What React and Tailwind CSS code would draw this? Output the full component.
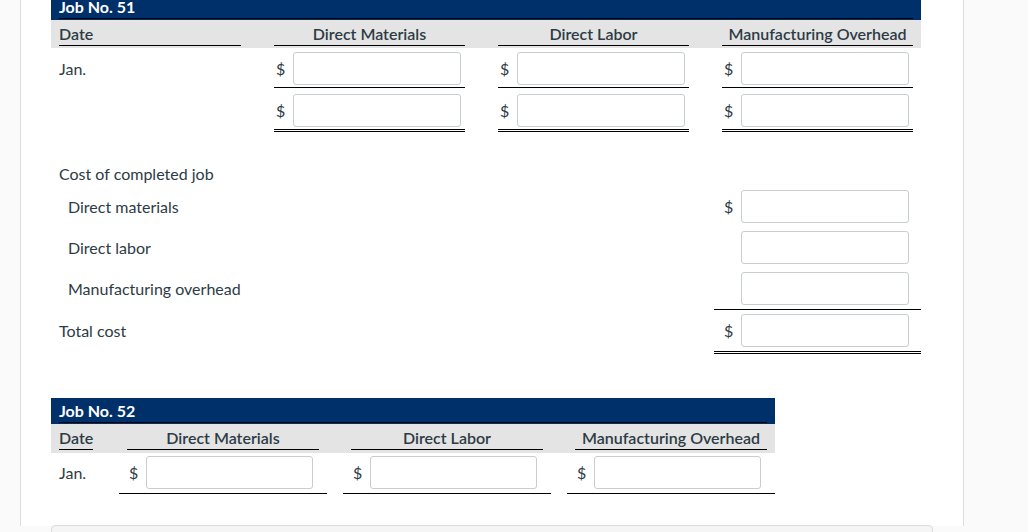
import React from "react";

const ink = "text-[#2d3b45]";

function Box({ w = "w-[168px]" }) {
    return <div className={`${w} h-[33px] shrink-0 rounded-[3px] border border-[#c7cdd1] bg-white`} />;
}

function Money({ dollar = true, w }) {
    return (
        <div className="flex items-center h-[33px]">
            <span className="w-[19px] pl-[2px] shrink-0">{dollar ? "$" : ""}</span>
            <Box w={w} />
        </div>
    );
}

function JobOne() {
    const heads = ["Direct Materials", "Direct Labor", "Manufacturing Overhead"];
    return (
        <div className="w-[870px] -mt-[6px]">
            <div className="h-[26px] bg-[#003069] px-2">
                <div className="h-[25px] border-b border-black text-white font-bold leading-[25px]">Job No. 51</div>
            </div>
            <div className="h-[28px] bg-[#e4e4e4] flex">
                <div className="w-[198px] px-2">
                    <div className="h-[26px] border-b border-black font-semibold leading-[27px]">Date</div>
                </div>
                {heads.map((h) => (
                    <div key={h} className="w-[207px] ml-[17px] px-2">
                        <div className="h-[26px] border-b border-black font-semibold leading-[27px] text-center">{h}</div>
                    </div>
                ))}
            </div>

            {/* Jan. row */}
            <div className="flex">
                <div className="w-[198px] px-2 mt-[4px] h-[33px] flex items-center">Jan.</div>
                {heads.map((h) => (
                    <div key={h} className="w-[207px] ml-[17px] px-2">
                        <div className="h-[40px] pt-[4px] border-b border-black">
                            <Money />
                        </div>
                    </div>
                ))}
            </div>
            <div className="flex">
                <div className="w-[198px] px-2" />
                {heads.map((h) => (
                    <div key={h} className="w-[207px] ml-[17px] px-2">
                        <div className="h-[44px] pt-[6px] border-b-[3px] border-double border-black">
                            <Money />
                        </div>
                    </div>
                ))}
            </div>

            <div className="h-[25px]" />
            <div className="h-[33px] flex items-center px-2">Cost of completed job</div>

            <div className="flex h-[33px] items-center mb-[8px]">
                <div className="pl-[17px]">Direct materials</div>
                <div className="ml-auto w-[207px] px-2"><Money /></div>
            </div>
            <div className="flex h-[33px] items-center mb-[8px]">
                <div className="pl-[17px]">Direct labor</div>
                <div className="ml-auto w-[207px] px-2"><Money dollar={false} /></div>
            </div>
            <div className="flex">
                <div className="pl-[17px] h-[33px] flex items-center">Manufacturing overhead</div>
                <div className="ml-auto w-[207px] px-2 h-[38px] border-b border-black"><Money dollar={false} /></div>
            </div>
            <div className="flex">
                <div className="px-2 mt-[4px] h-[33px] flex items-center">Total cost</div>
                <div className="ml-auto w-[207px] px-2 pt-[4px] h-[44px] border-b-[3px] border-double border-black"><Money /></div>
            </div>
        </div>
    );
}

function JobTwo() {
    const heads = ["Direct Materials", "Direct Labor", "Manufacturing Overhead"];
    return (
        <div className="w-[724px] mt-[44px]">
            <div className="h-[26px] bg-[#003069] px-2">
                <div className="h-[25px] border-b border-black text-white font-bold leading-[25px]">Job No. 52</div>
            </div>
            <div className="h-[29px] bg-[#e4e4e4] flex">
                <div className="w-[68px] px-2">
                    <div className="h-[26px] inline-block border-b border-black font-semibold leading-[27px]">Date</div>
                </div>
                {heads.map((h, i) => (
                    <div key={h} className={`w-[208px] px-2 ${i ? "ml-[16px]" : ""}`}>
                        <div className="h-[26px] border-b border-black font-semibold leading-[27px] text-center">{h}</div>
                    </div>
                ))}
            </div>
            <div className="flex">
                <div className="w-[68px] px-2 mt-[3px] h-[33px] flex items-center">Jan.</div>
                {heads.map((h, i) => (
                    <div key={h} className={`w-[208px] h-[41px] pt-[3px] px-2 border-b border-black ${i ? "ml-[16px]" : ""}`}>
                        <Money w="w-[167px]" />
                    </div>
                ))}
            </div>
        </div>
    );
}

export default function App() {
    return (
        <div className={`h-[532px] overflow-hidden bg-[#fafafa] font-['Lato',sans-serif] text-[16px] ${ink}`}>
            <div className="ml-[20px] w-[944px] h-full border-x border-[#dddddd] bg-white pl-[30px]">
                <JobOne />
                <JobTwo />
                <div className="mt-[31px] w-[882px] h-[40px] rounded-t-[4px] border border-[#dddddd] bg-[#f5f5f5]" />
            </div>
        </div>
    );
}
